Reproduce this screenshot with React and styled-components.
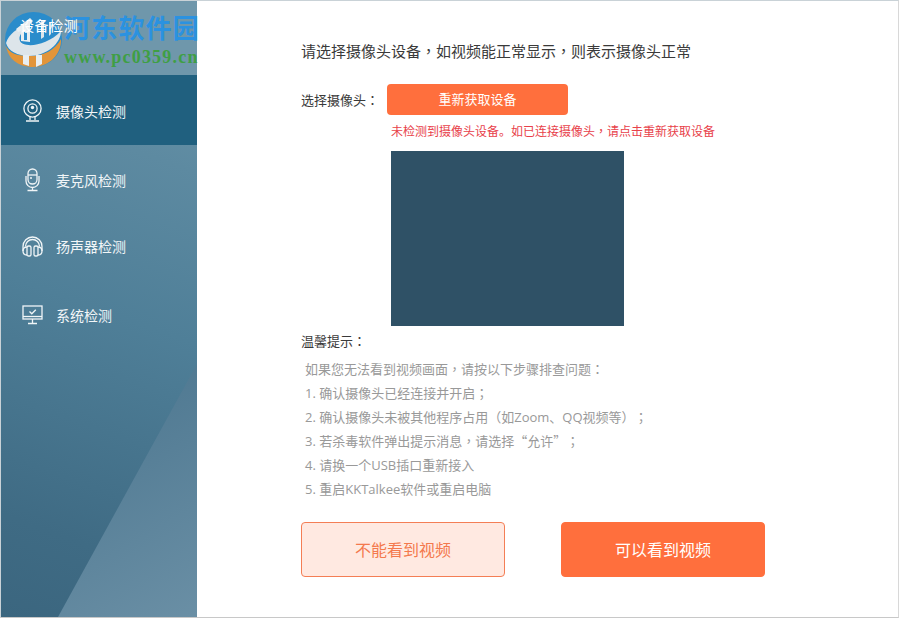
import React from "react";
import styled, { createGlobalStyle } from "styled-components";

const Global = createGlobalStyle`
  html, body { margin: 0; padding: 0; background: #fff; }
  body {
    font-family: "Noto Sans CJK SC", "Liberation Sans", sans-serif;
    text-spacing-trim: space-all;
  }
`;

const CJK = `"Noto Sans CJK SC", "Noto Sans", sans-serif`;
const MIXED = `"Open Sans", "Noto Sans CJK SC", sans-serif`;

const Frame = styled.div`
  position: relative;
  width: 899px;
  height: 618px;
  box-sizing: border-box;
  display: flex;
  background: #fff;
  border-left: 1px solid #c9d2d7;
  border-top: 1px solid #c9d2d7;
  border-right: 1px solid #d8d8d8;
  border-bottom: 1px solid #c8c8c8;
  overflow: hidden;
`;

const Sidebar = styled.aside`
  position: relative;
  width: 196px;
  flex: none;
  display: flex;
  flex-direction: column;
  color: #fff;
  background: linear-gradient(200deg, #6f98ab 0%, #5d8aa1 25%, #4f7f98 50%, #3f6b84 85%, #3b667f 100%);
  overflow: hidden;
  &::after {
    content: "";
    position: absolute;
    inset: 0;
    background: linear-gradient(150deg, #4d7790 60%, #6a8fa5 100%);
    clip-path: polygon(196px 363px, 196px 616px, 57px 616px);
  }
`;

const Head = styled.div`
  height: 74px;
  flex: none;
  box-sizing: border-box;
  padding: 14px 0 0 19px;
  background: #6f97ab;
`;

const HeadLabel = styled.div`
  position: relative;
  z-index: 6;
  font: 14px/20px ${CJK};
  letter-spacing: .6px;
`;

const Row = styled.div`
  position: relative;
  z-index: 1;
  flex: none;
  height: ${(p) => p.$h}px;
  display: flex;
  align-items: center;
  box-sizing: border-box;
  padding-left: 21px;
  padding-top: ${(p) => (p.$active ? 2 : 0)}px;
  gap: 13px;
  background: ${(p) => (p.$active ? "#20607f" : "transparent")};
  font: 14px/20px ${CJK};
  color: #f2f6f8;
`;

const IconBox = styled.svg`
  width: 21px;
  height: 24px;
  flex: none;
  fill: none;
  stroke: #f0f5f7;
  stroke-width: 1.3;
`;

const Main = styled.main`
  flex: 1;
  min-width: 0;
  box-sizing: border-box;
  padding: 40px 0 0 104px;
  display: flex;
  flex-direction: column;
`;

const Title = styled.h1`
  margin: 0;
  font: 400 15px/20px ${CJK};
  color: #3a3a3a;
`;

const Mark = styled.span`
  font-family: "Noto Sans CJK TC", sans-serif;
`;

const SelectRow = styled.div`
  margin-top: 23px;
  display: flex;
  align-items: center;
  gap: 8px;
  font: 13px/20px ${CJK};
  color: #3a3a3a;
`;

const RefreshButton = styled.button`
  width: 181px;
  height: 31px;
  border: 0;
  border-radius: 4px;
  background: #ff6f3d;
  color: #fff;
  font: 13px/20px ${CJK};
  padding: 0 0 2px;
`;

const ErrorText = styled.div`
  margin: 7px 0 0 90px;
  font: 12px/18px ${CJK};
  color: #e8414a;
`;

const Video = styled.div`
  margin: 11px 0 0 90px;
  width: 233px;
  height: 175px;
  background: #2f5166;
`;

const HintTitle = styled.div`
  margin-top: 5px;
  font: 13px/20px ${CJK};
  color: #3a3a3a;
`;

const HintList = styled.ul`
  list-style: none;
  margin: 6px 0 0;
  padding: 0 0 0 4px;
  font: 13px/24px ${MIXED};
  color: #999;
`;

const Actions = styled.div`
  margin-top: 21px;
  display: flex;
  gap: 56px;
`;

const BigButton = styled.button`
  width: 204px;
  height: 55px;
  box-sizing: border-box;
  border-radius: 4px;
  padding: 0 0 2px;
  font: 16px/20px ${CJK};
  border: 1px solid ${(p) => (p.$solid ? "#ff6f3d" : "#f47e55")};
  background: ${(p) => (p.$solid ? "#ff6f3d" : "#ffe9e1")};
  color: ${(p) => (p.$solid ? "#fff" : "#f4794d")};
`;

const Watermark = styled.div`
  position: absolute;
  left: 4px;
  top: 11px;
  z-index: 5;
  display: flex;
  pointer-events: none;
`;

const WatermarkLogo = styled.svg`
  width: 57px;
  height: 55px;
  flex: none;
`;

const WatermarkText = styled.div`
  margin: -1px 0 0 2px;
  display: flex;
  flex-direction: column;
`;

const WatermarkName = styled.div`
  font: 700 26px/32px ${CJK};
  color: #2b92e0;
  letter-spacing: 1.2px;
`;

const WatermarkUrl = styled.div`
  margin: 4px 0 0;
  font: 700 18px/20px "Liberation Serif", serif;
  color: #3f9f44;
  letter-spacing: 1.2px;
`;

const CameraIcon = () => (
  <IconBox viewBox="0 0 21 24">
    <circle cx="10.500" cy="9.500" r="8.600" />
    <circle cx="10.500" cy="9.500" r="4.600" />
    <circle cx="10.500" cy="8.500" r="1.700" fill="#f0f5f7" stroke="none" />
    <path d="M8 18v3M13 18v3M4 22h13" />
  </IconBox>
);

const MicIcon = () => (
  <IconBox viewBox="0 0 21 24">
    <rect x="6" y="1" width="9" height="15" rx="4.500" />
    <path d="M6 7h9" />
    <circle cx="9" cy="10" r="1" fill="#f0f5f7" stroke="none" />
    <path d="M4 8v5a6.500 6.500 0 0 0 13 0V8M10.500 19.500V22M5.500 22.500h10" />
  </IconBox>
);

const SpeakerIcon = () => (
  <IconBox viewBox="0 0 21 24">
    <path d="M1 17v-4.500a9.500 9.500 0 0 1 19 0V17" />
    <path d="M3.500 12.500a7 7 0 0 1 14 0" />
    <rect x="5" y="12" width="4" height="10" rx="1.600" />
    <rect x="12" y="12" width="4" height="10" rx="1.600" />
    <path d="M5 13C2 13 1 15 1 17s1 4 4 4M16 13c3 0 4 2 4 4s-1 4-4 4" />
  </IconBox>
);

const MonitorIcon = () => (
  <IconBox viewBox="0 0 21 24">
    <rect x="1" y="3" width="19" height="13" />
    <path d="M1 13.500h19" />
    <path d="M7.500 8.500l2.300 2.300 4-4" />
    <path d="M10.500 16v4M6 20.500h9" />
  </IconBox>
);

const SiteLogo = () => (
  <WatermarkLogo viewBox="0 0 57 55">
    <ellipse cx="28.500" cy="27.500" rx="28.500" ry="27.500" fill="#2a8ccb" />
    <path d="M1 34c4 8 12 10 24 10 14 0 25-6 31-17 1 14-11 28-27.500 28S3 46 1 34z" fill="#e2953a" />
    <path d="M1 31C4 22 12 16 22 13l2 3c-7 3-11 8-9 13 3 7 26 6 41-10 0 12-14 25-32 25C13 44 3 39 1 31z" fill="#dde5ea" />
    <path d="M11 17L25 6l3 3-3 3v18l-9-1V19l-3 1z" fill="#e8eef1" />
    <path d="M19 20h3v8h-3z" fill="#2a8ccb" />
    <path d="M18 43h6v11l-6-2zM31 43h6v9l-6 3z" fill="#e8eef1" />
    <path d="M36 8h3v17l-3 2zM44 10h2v12l-2 2z" fill="#dde5ea" />
  </WatermarkLogo>
);

const Text = ({ children }) =>
  children.split(/([，：；“”])/).map((part, i) =>
    i % 2 ? <Mark key={i}>{part}</Mark> : part
  );

const menu = [
  { label: "摄像头检测", Icon: CameraIcon, h: 70, active: true },
  { label: "麦克风检测", Icon: MicIcon, h: 69 },
  { label: "扬声器检测", Icon: SpeakerIcon, h: 63 },
  { label: "系统检测", Icon: MonitorIcon, h: 75 },
];

const hints = [
  "如果您无法看到视频画面，请按以下步骤排查问题：",
  "1. 确认摄像头已经连接并开启；",
  "2. 确认摄像头未被其他程序占用（如Zoom、QQ视频等）；",
  "3. 若杀毒软件弹出提示消息，请选择“允许”；",
  "4. 请换一个USB插口重新接入",
  "5. 重启KKTalkee软件或重启电脑",
];

export default function App() {
  return (
    <Frame>
      <Global />
      <Sidebar>
        <Head>
          <HeadLabel>设备检测</HeadLabel>
        </Head>
        {menu.map(({ label, Icon, h, active }) => (
          <Row key={label} $h={h} $active={active}>
            <Icon />
            {label}
          </Row>
        ))}
      </Sidebar>
      <Main>
        <Title>
          <Text>请选择摄像头设备，如视频能正常显示，则表示摄像头正常</Text>
        </Title>
        <SelectRow>
          <span>
            <Text>选择摄像头：</Text>
          </span>
          <RefreshButton>重新获取设备</RefreshButton>
        </SelectRow>
        <ErrorText>
          <Text>未检测到摄像头设备。如已连接摄像头，请点击重新获取设备</Text>
        </ErrorText>
        <Video />
        <HintTitle>
          <Text>温馨提示：</Text>
        </HintTitle>
        <HintList>
          {hints.map((t) => (
            <li key={t}>
              <Text>{t}</Text>
            </li>
          ))}
        </HintList>
        <Actions>
          <BigButton>不能看到视频</BigButton>
          <BigButton $solid>可以看到视频</BigButton>
        </Actions>
      </Main>
      <Watermark>
        <SiteLogo />
        <WatermarkText>
          <WatermarkName>河东软件园</WatermarkName>
          <WatermarkUrl>www.pc0359.cn</WatermarkUrl>
        </WatermarkText>
      </Watermark>
    </Frame>
  );
}
